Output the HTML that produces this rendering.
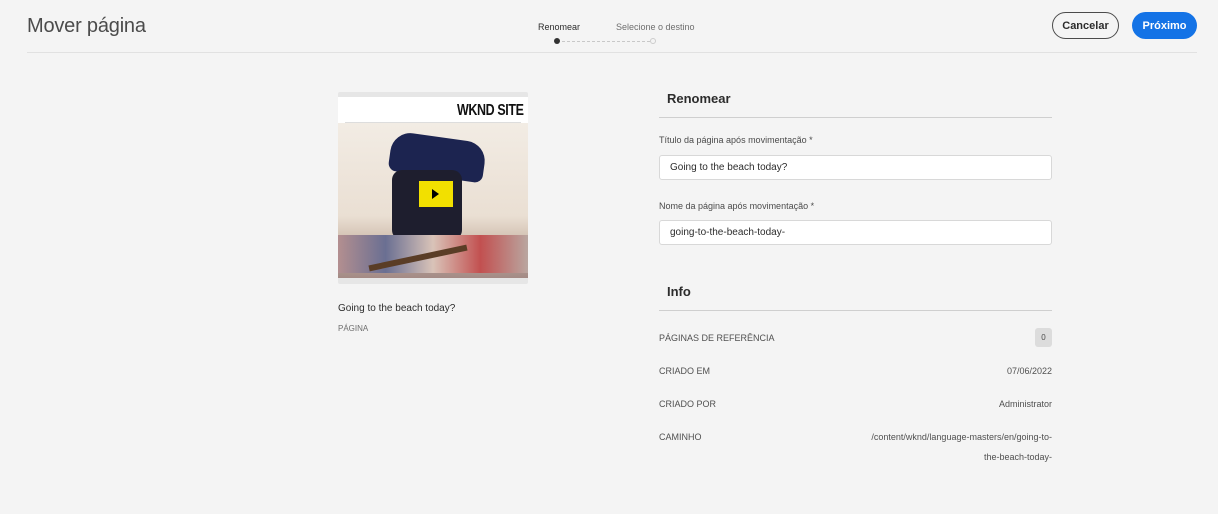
<!DOCTYPE html>
<html><head><meta charset="utf-8"><style>
*{box-sizing:border-box;margin:0;padding:0}
body{width:1218px;height:514px;background:#f4f4f4;font-family:"Liberation Sans",sans-serif;color:#2c2c2c;position:relative;overflow:hidden}
.a{position:absolute;white-space:nowrap}
.t{font-size:20px;color:#4b4b4b;left:27px;top:15px;letter-spacing:-0.2px}
.hr{position:absolute;left:27px;right:21px;top:52px;height:1px;background:#e1e1e1}
.btn{position:absolute;top:12px;height:27px;border-radius:14px;font-size:11px;font-weight:bold;display:flex;align-items:center;justify-content:center}
.lab{font-size:9px;color:#4b4b4b}
.in{position:absolute;left:659px;width:393px;height:25px;background:#fff;border:1px solid #d8d8d8;border-radius:3px;font-size:10px;padding:0 10px;display:flex;align-items:center;color:#2c2c2c}
.h{font-size:13px;font-weight:bold;left:667px;color:#2c2c2c}
.line{position:absolute;left:659px;width:393px;height:1px;background:#cfcfcf}
.k{left:659px;font-size:9px;color:#505050}
.v{right:166px;font-size:9px;color:#505050;text-align:right}
</style></head><body>
<div class="a t">Mover página</div>
<div class="a" style="left:538px;top:22px;font-size:9px;color:#2c2c2c">Renomear</div>
<div class="a" style="left:616px;top:22px;font-size:9px;color:#6e6e6e">Selecione o destino</div>
<div style="position:absolute;left:554px;top:38px;width:6px;height:6px;border-radius:50%;background:#323232"></div>
<div style="position:absolute;left:562px;top:41px;width:88px;border-top:1px dashed #c8c8c8"></div>
<div style="position:absolute;left:650px;top:38px;width:6px;height:6px;border-radius:50%;border:1px solid #ccc"></div>
<div class="btn" style="left:1052px;width:67px;border:1px solid #4b4b4b;color:#2c2c2c">Cancelar</div>
<div class="btn" style="left:1132px;width:65px;background:#1473e6;color:#fff">Próximo</div>
<div class="hr"></div>

<div style="position:absolute;left:338px;top:92px;width:190px;height:192px;background:#e6e6e6;border-radius:2px"></div>
<div style="position:absolute;left:338px;top:97px;width:190px;height:26px;background:#fff"></div>
<div class="a" style="left:457px;top:102px;font-size:16px;font-weight:bold;letter-spacing:-0.5px;color:#111;transform:scaleX(0.78);transform-origin:left">WKND SITE</div>
<div style="position:absolute;left:345px;top:122px;width:176px;height:1px;background:#ddd"></div>
<div style="position:absolute;left:338px;top:123px;width:190px;height:155px;background:linear-gradient(#f2ece4,#eadfd3 60%,#c9b6a6 80%,#a38a85)"></div>
<div style="position:absolute;left:390px;top:137px;width:95px;height:40px;background:#1c2450;border-radius:20px 20px 8px 8px;transform:rotate(8deg)"></div>
<div style="position:absolute;left:392px;top:170px;width:70px;height:70px;background:#1e1e2e;border-radius:10px"></div>
<div style="position:absolute;left:338px;top:235px;width:190px;height:38px;background:linear-gradient(90deg,#b38f90,#6a6f92,#d9c3b8,#c25050,#b9a6a0)"></div>
<div style="position:absolute;left:368px;top:255px;width:100px;height:6px;background:#5a3d26;transform:rotate(-12deg)"></div>
<div style="position:absolute;left:419px;top:181px;width:34px;height:26px;background:#f2e000"></div>
<div style="position:absolute;left:432px;top:189px;border-left:7px solid #000;border-top:5px solid transparent;border-bottom:5px solid transparent"></div>
<div class="a" style="left:338px;top:303px;font-size:10px;color:#2c2c2c">Going to the beach today?</div>
<div class="a" style="left:338px;top:324px;font-size:8px;color:#6e6e6e">PÁGINA</div>

<div class="a h" style="top:91px">Renomear</div>
<div class="line" style="top:117px"></div>
<div class="a lab" style="left:659px;top:135px">Título da página após movimentação *</div>
<div class="in" style="top:155px">Going to the beach today?</div>
<div class="a lab" style="left:659px;top:201px">Nome da página após movimentação *</div>
<div class="in" style="top:220px">going-to-the-beach-today-</div>
<div class="a h" style="top:284px">Info</div>
<div class="line" style="top:310px"></div>
<div class="a k" style="top:333px">PÁGINAS DE REFERÊNCIA</div>
<div style="position:absolute;left:1035px;top:328px;width:17px;height:19px;background:#dcdcdc;border-radius:3px;font-size:8px;text-align:center;line-height:19px;color:#4b4b4b">0</div>
<div class="a k" style="top:366px">CRIADO EM</div>
<div class="a v" style="top:366px">07/06/2022</div>
<div class="a k" style="top:399px">CRIADO POR</div>
<div class="a v" style="top:399px">Administrator</div>
<div class="a k" style="top:432px">CAMINHO</div>
<div class="a v" style="top:427px;line-height:20px">/content/wknd/language-masters/en/going-to-<br>the-beach-today-</div>
</body></html>
